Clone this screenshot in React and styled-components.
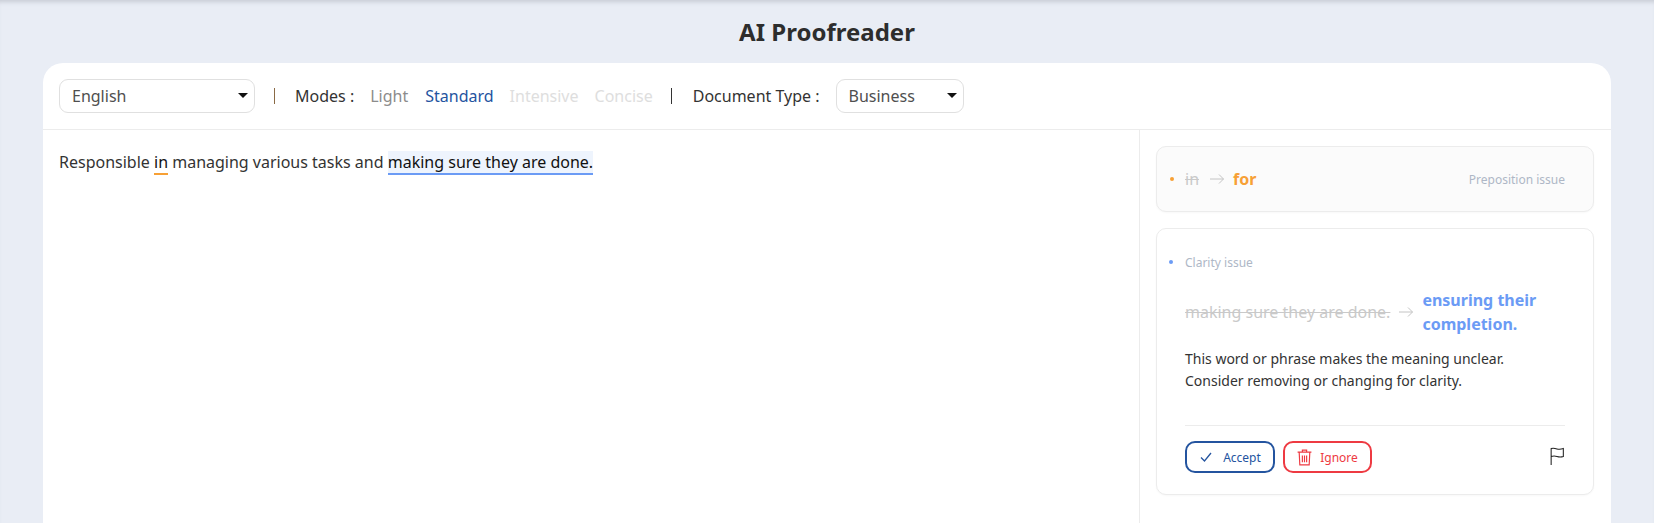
import React from "react";
import styled, { createGlobalStyle } from "styled-components";

const GlobalStyle = createGlobalStyle`
  html, body {
    margin: 0;
    height: 100%;
    overflow: hidden;
    background: #e9edf5;
    font-family: "Noto Sans", sans-serif;
    color: #2f2f2f;
  }
`;

const Page = styled.div`
  height: 523px;
  padding: 0 43px;
  box-sizing: border-box;
  display: flex;
  flex-direction: column;
  box-shadow: inset 0 5px 4px -3px rgba(120, 125, 140, 0.3);
`;

const Title = styled.h1`
  margin: 0;
  height: 63px;
  line-height: 63px;
  text-align: center;
  font-size: 24px;
  font-weight: 700;
  color: #2d2d2d;
`;

const Panel = styled.div`
  flex: 1;
  background: #fff;
  border-radius: 20px 20px 0 0;
  display: flex;
  flex-direction: column;
  min-height: 0;
`;

const Toolbar = styled.div`
  height: 67px;
  flex: none;
  box-sizing: border-box;
  border-bottom: 1px solid #ececec;
  padding: 0 16px 1px;
  display: flex;
  align-items: center;
  font-size: 16px;
`;

const SelectBox = styled.div`
  width: ${(props) => props.width}px;
  height: 34px;
  margin-left: ${(props) => props.gap || 0}px;
  box-sizing: border-box;
  border: 1px solid #e0e0e0;
  border-radius: 9px;
  padding: 0 12px;
  display: flex;
  align-items: center;
  justify-content: space-between;
  color: #4f4f4f;
`;

const Caret = styled.span`
  width: 0;
  height: 0;
  border-left: 5px solid transparent;
  border-right: 5px solid transparent;
  border-top: 5px solid #111;
  margin-right: -6px;
`;

const Separator = styled.span`
  width: 1px;
  height: 16px;
  background: ${(props) => props.color};
  margin: ${(props) => props.margin};
`;

const Label = styled.span`
  color: #333;
  white-space: nowrap;
`;

const Mode = styled.span`
  color: ${(props) => props.color};
  margin-left: ${(props) => props.gap}px;
`;

const Body = styled.div`
  flex: 1;
  display: flex;
  min-height: 0;
`;

const Editor = styled.div`
  flex: 1;
  padding: 19px 16px;
  font-size: 16px;
  line-height: 26px;
  color: #333;
`;

const Marked = styled.span`
  color: #111;
  background: ${(props) => props.bg || "transparent"};
  border-bottom: 2px solid ${(props) => props.line};
`;

const Side = styled.div`
  width: 472px;
  flex: none;
  box-sizing: border-box;
  border-left: 1px solid #ececec;
  padding: 16px 17px 0 16px;
  display: flex;
  flex-direction: column;
  gap: 16px;
`;

const Card = styled.div`
  border: 1px solid #ececec;
  border-radius: 10px;
  background: ${(props) => props.bg};
  box-shadow: 0 1px 2px rgba(0, 0, 0, 0.03);
`;

const CollapsedCard = styled(Card)`
  height: 66px;
  box-sizing: border-box;
  padding: 0 28px 0 13px;
  display: flex;
  align-items: center;
`;

const Dot = styled.span`
  width: 4px;
  height: 4px;
  border-radius: 50%;
  background: ${(props) => props.color};
  flex: none;
`;

const OldText = styled.span`
  color: #c9c9c9;
  text-decoration: line-through;
  font-size: 16px;
  margin-left: 11px;
`;

const Arrow = styled.svg`
  width: 16px;
  height: 12px;
  margin: 0 8px 0 10px;
  flex: none;
`;

const NewText = styled.span`
  color: ${(props) => props.color};
  font-size: 16px;
  font-weight: 700;
  line-height: 24px;
`;

const IssueType = styled.span`
  margin-left: auto;
  color: #aeb7c6;
  font-size: 12px;
`;

const OpenCard = styled(Card)`
  height: 267px;
  box-sizing: border-box;
  padding: 23px 28px 0 28px;
  display: flex;
  flex-direction: column;
`;

const IssueRow = styled.div`
  display: flex;
  align-items: center;
  height: 20px;
  margin-left: -16px;
`;

const ClarityType = styled(IssueType)`
  margin-left: 12px;
`;

const Change = styled.div`
  display: flex;
  align-items: center;
  margin-top: 16px;
`;

const OldPhrase = styled(OldText)`
  margin-left: 0;
  white-space: nowrap;
`;

const ChangeArrow = styled(Arrow)`
  margin: 0 8px 0 8px;
`;

const Explanation = styled.p`
  margin: 12px 0 0;
  font-size: 14px;
  line-height: 22px;
  color: #333;
`;

const Footer = styled.div`
  margin-top: auto;
  border-top: 1px solid #ececec;
  padding: 15px 0 21px;
  display: flex;
  align-items: center;
  gap: 8px;
`;

const ActionButton = styled.button`
  width: ${(props) => props.width}px;
  height: 32px;
  box-sizing: border-box;
  background: #fff;
  border: 2px solid ${(props) => props.color};
  border-radius: 10px;
  padding: 0;
  display: flex;
  align-items: center;
  justify-content: center;
  gap: ${(props) => props.gap}px;
  font-family: inherit;
  font-size: 12px;
  color: ${(props) => props.color};
`;

const FlagIcon = styled.svg`
  width: 15px;
  height: 18px;
  margin-left: auto;
  margin-top: -3px;
`;

function ArrowGlyph({ as: Comp = Arrow }) {
  return (
    <Comp viewBox="0 0 16 12" fill="none" stroke="#c4c4c4" strokeWidth="1">
      <path d="M1 6h13.5M10 1.5 14.5 6 10 10.5" />
    </Comp>
  );
}

export default function App() {
  return (
    <>
      <GlobalStyle />
      <Page>
        <Title>AI Proofreader</Title>
        <Panel>
          <Toolbar>
            <SelectBox width={196}>
              English
              <Caret />
            </SelectBox>
            <Separator color="#8a6a45" margin="0 20px 0 19px" />
            <Label>Modes :</Label>
            <Mode color="#8c8c8c" gap={16}>Light</Mode>
            <Mode color="#24549f" gap={17}>Standard</Mode>
            <Mode color="#dedede" gap={16}>Intensive</Mode>
            <Mode color="#dedede" gap={16}>Concise</Mode>
            <Separator color="#333" margin="0 21px 0 18px" />
            <Label>Document Type :</Label>
            <SelectBox width={128} gap={16}>
              Business
              <Caret />
            </SelectBox>
          </Toolbar>
          <Body>
            <Editor>
              Responsible <Marked line="#f7a035">in</Marked> managing various tasks and{" "}
              <Marked line="#6b9bf5" bg="#eef4fd">making sure they are done.</Marked>
            </Editor>
            <Side>
              <CollapsedCard bg="#fbfbfb">
                <Dot color="#f7a035" />
                <OldText>in</OldText>
                <ArrowGlyph />
                <NewText color="#f7a035">for</NewText>
                <IssueType>Preposition issue</IssueType>
              </CollapsedCard>
              <OpenCard bg="#fff">
                <IssueRow>
                  <Dot color="#6b9bf5" />
                  <ClarityType>Clarity issue</ClarityType>
                </IssueRow>
                <Change>
                  <OldPhrase>making sure they are done.</OldPhrase>
                  <ArrowGlyph as={ChangeArrow} />
                  <NewText color="#6b9bf5">ensuring their completion.</NewText>
                </Change>
                <Explanation>
                  This word or phrase makes the meaning unclear.
                  <br />
                  Consider removing or changing for clarity.
                </Explanation>
                <Footer>
                  <ActionButton color="#24549f" width={90} gap={10}>
                    <svg width="14" height="12" viewBox="0 0 14 12" fill="none" stroke="#24549f" strokeWidth="1.3">
                      <path d="M2 6.5 5.5 10 12 2" />
                    </svg>
                    Accept
                  </ActionButton>
                  <ActionButton color="#ee3a42" width={89} gap={8}>
                    <svg width="15" height="17" viewBox="0 0 14 16" fill="none" stroke="#ee3a42" strokeWidth="1.1">
                      <path d="M0.5 3h13M5 3V1h4v2M2 3l.6 12h8.8L12 3M5 6v6.5M7 6v6.5M9 6v6.5" />
                    </svg>
                    Ignore
                  </ActionButton>
                  <FlagIcon viewBox="0 0 14 17" fill="none" stroke="#222" strokeWidth="1">
                    <path d="M1 17V1.500c2-.7 3.500-.3 5.500.3s3.500.5 6-.3V9c-2.500.8-4 .6-6 0s-3.500-.6-5.500 0" />
                  </FlagIcon>
                </Footer>
              </OpenCard>
            </Side>
          </Body>
        </Panel>
      </Page>
    </>
  );
}
